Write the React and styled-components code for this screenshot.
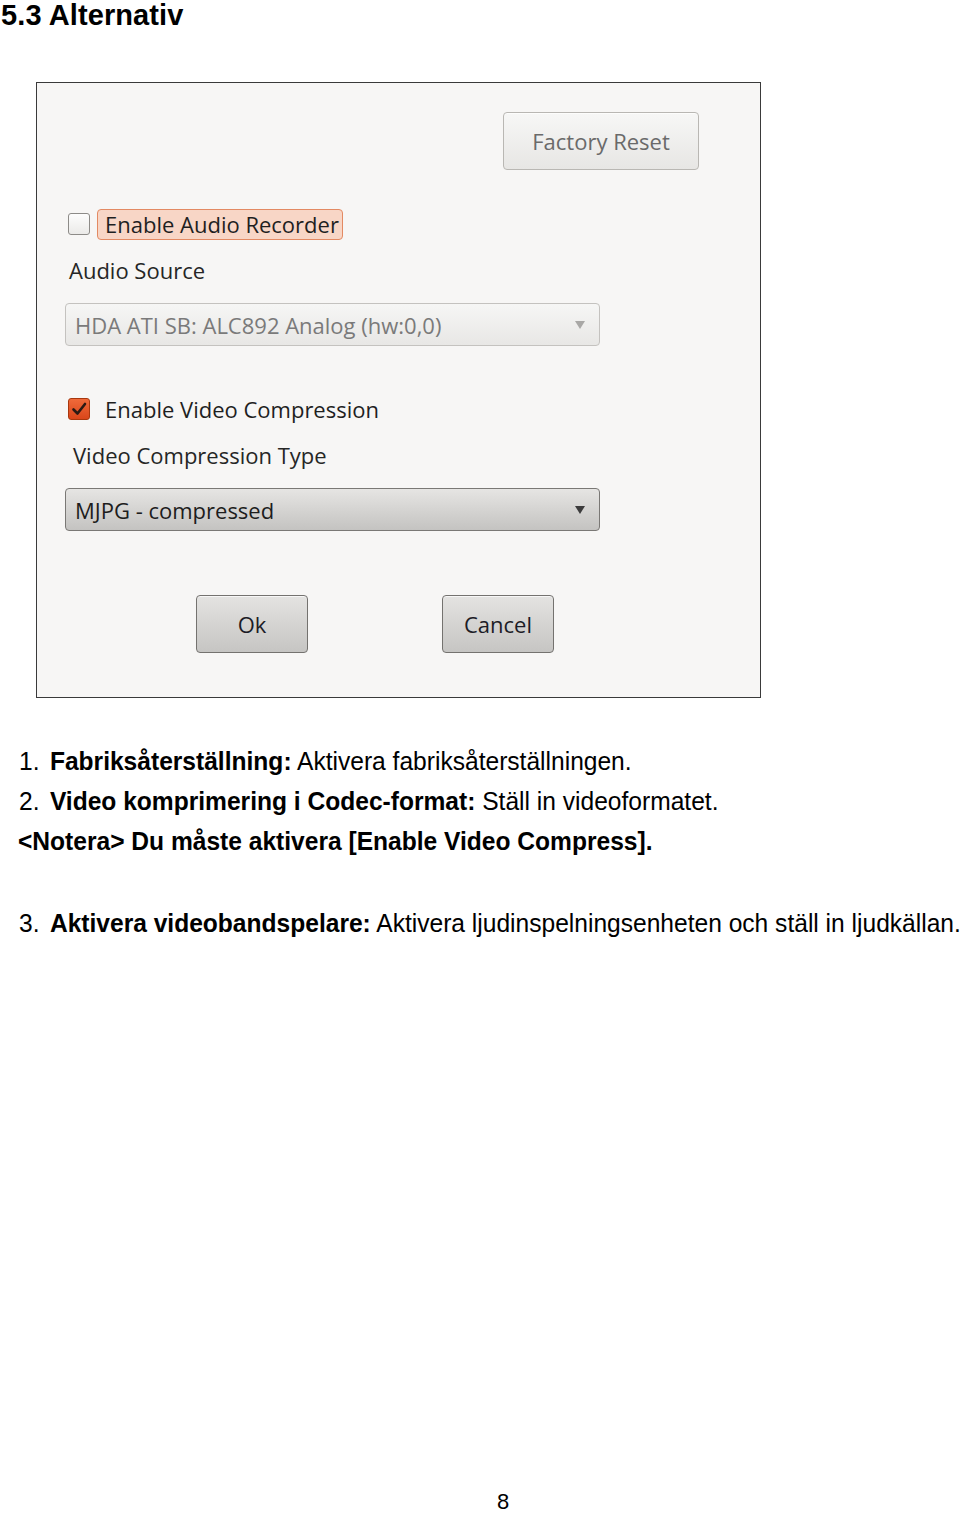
import React from 'react'
import styled, { createGlobalStyle } from 'styled-components'

const GlobalStyle = createGlobalStyle`
    html, body {
        margin: 0;
        padding: 0;
        background: #fff;
    }
    body {
        font-family: "Liberation Sans", Arial, sans-serif;
        color: #000;
    }
`

const App = () => {
    return (
        <Page>
            <GlobalStyle />
            <Heading>5.3 Alternativ</Heading>

            <Dialog>
                <TopRow>
                    <GtkButton $muted $w={196} $h={58}>Factory Reset</GtkButton>
                </TopRow>

                <CheckRow $top={38}>
                    <CheckBox />
                    <FocusLabel>Enable Audio Recorder</FocusLabel>
                </CheckRow>
                <FieldLabel $left={32}>Audio Source</FieldLabel>
                <Combo $disabled>
                    <span>HDA ATI SB: ALC892 Analog (hw:0,0)</span>
                    <Arrow $disabled />
                </Combo>

                <CheckRow $top={47}>
                    <CheckBox $checked>
                        <svg width="16" height="14" viewBox="0 0 16 14">
                            <path d="M2.5 7.5 L6.5 11.5 L14 2" fill="none" stroke="#2b1a14" strokeWidth="2.6" strokeLinecap="round" strokeLinejoin="round" />
                        </svg>
                    </CheckBox>
                    <PlainLabel>Enable Video Compression</PlainLabel>
                </CheckRow>
                <FieldLabel $left={36}>Video Compression Type</FieldLabel>
                <Combo>
                    <span>MJPG - compressed</span>
                    <Arrow />
                </Combo>

                <ButtonRow>
                    <GtkButton $w={112} $h={58}>Ok</GtkButton>
                    <GtkButton $w={112} $h={58}>Cancel</GtkButton>
                </ButtonRow>
            </Dialog>

            <Notes>
                <Line $top={43}>
                    <Narrow>
                        <Num>1.</Num><b>Fabriksåterställning:</b> Aktivera fabriksåterställningen.
                    </Narrow>
                </Line>
                <Line>
                    <Narrow>
                        <Num>2.</Num><b>Video komprimering i Codec-format:</b> Ställ in videoformatet.
                    </Narrow>
                </Line>
                <Line $left={18}>
                    <Narrow>
                        <b>&lt;Notera&gt; Du måste aktivera [Enable Video Compress].</b>
                    </Narrow>
                </Line>
                <Line $top={42}>
                    <Narrow>
                        <Num>3.</Num><b>Aktivera videobandspelare:</b> Aktivera ljudinspelningsenheten och ställ in ljudkällan.
                    </Narrow>
                </Line>
            </Notes>

            <PageNumber>8</PageNumber>
        </Page>
    )
}

const Page = styled.div`
    width: 960px;
    height: 1515px;
    position: relative;
    overflow: hidden;
    display: flex;
    flex-direction: column;
`

const Heading = styled.h1`
    margin: 0;
    padding-left: 1px;
    font-size: 29px;
    line-height: 30px;
    font-weight: bold;
    letter-spacing: 0.1px;
`

const Dialog = styled.div`
    margin: 52px 0 0 36px;
    width: 723px;
    height: 614px;
    border: 1px solid #3a3a3a;
    background: #f7f6f5;
    box-sizing: content-box;
    font-family: "Open Sans", "Noto Sans", sans-serif;
    font-weight: 500;
    color: #2e2e2e;
    display: flex;
    flex-direction: column;
`

const TopRow = styled.div`
    display: flex;
    justify-content: flex-end;
    padding: 29px 61px 0 0;
`

const GtkButton = styled.div`
    width: ${p => p.$w}px;
    height: ${p => p.$h}px;
    box-sizing: border-box;
    border: 1px solid ${p => (p.$muted ? '#b9b7b3' : '#74726f')};
    border-radius: 4px;
    background: ${p => (p.$muted
        ? 'linear-gradient(#f7f7f6, #e7e6e4)'
        : 'linear-gradient(#e4e3e1, #c6c5c3)')};
    box-shadow: inset 0 1px 0 rgba(255,255,255,0.7);
    display: flex;
    align-items: center;
    justify-content: center;
    font-size: 22px;
    color: ${p => (p.$muted ? '#6a6a6a' : '#1c1c26')};
`

const CheckRow = styled.div`
    display: flex;
    align-items: center;
    margin: ${p => p.$top}px 0 0 31px;
    height: 32px;
`

const CheckBox = styled.div`
    width: 22px;
    height: 22px;
    box-sizing: border-box;
    border-radius: 3px;
    border: 1px solid ${p => (p.$checked ? '#a8380e' : '#8d8b88')};
    background: ${p => (p.$checked ? 'linear-gradient(#ef6a3a, #d9461a)' : 'linear-gradient(#fdfdfd, #ebeae8)')};
    display: flex;
    align-items: center;
    justify-content: center;
    margin-right: 7px;
`

const FocusLabel = styled.div`
    height: 31px;
    box-sizing: border-box;
    padding: 0 3px 0 7px;
    border: 1px solid #e38a63;
    border-radius: 4px;
    background: #f8d6c6;
    display: flex;
    align-items: center;
    font-size: 22px;
    color: #1f1f1f;
`

const PlainLabel = styled.div`
    padding-left: 8px;
    font-size: 22px;
    color: #1f1f1f;
`

const FieldLabel = styled.div`
    margin: 15px 0 0 ${p => p.$left}px;
    font-size: 22px;
    line-height: 30px;
    color: #262626;
`

const Combo = styled.div`
    margin: 18px 0 0 28px;
    width: 535px;
    height: 43px;
    box-sizing: border-box;
    border: 1px solid ${p => (p.$disabled ? '#c4c2bf' : '#7a7875')};
    border-radius: 4px;
    background: ${p => (p.$disabled
        ? 'linear-gradient(#f6f6f5, #e8e7e5)'
        : 'linear-gradient(#e6e5e3, #c4c3c1)')};
    display: flex;
    align-items: center;
    justify-content: space-between;
    padding: 0 14px 0 9px;
    font-size: 22px;
    color: ${p => (p.$disabled ? '#7a7a7a' : '#1d1d1d')};
`

const Arrow = styled.div`
    width: 0;
    height: 0;
    border-left: 5px solid transparent;
    border-right: 5px solid transparent;
    border-top: 8px solid ${p => (p.$disabled ? '#a9a8a6' : '#3c3c3c')};
`

const ButtonRow = styled.div`
    display: flex;
    gap: 134px;
    margin: 64px 0 0 159px;
`

const Notes = styled.div`
    display: flex;
    flex-direction: column;
`

const Line = styled.div`
    margin: ${p => p.$top || 0}px 0 0 ${p => p.$left || 19}px;
    height: 40px;
    line-height: 40px;
    font-size: 26px;
    white-space: nowrap;
`

const Narrow = styled.span`
    display: inline-block;
    transform: scaleX(0.945);
    transform-origin: left center;
`

const Num = styled.span`
    margin-right: 11px;
`

const PageNumber = styled.div`
    position: absolute;
    left: 497px;
    top: 1493px;
    font-size: 22px;
    line-height: 18px;
`

export default App
